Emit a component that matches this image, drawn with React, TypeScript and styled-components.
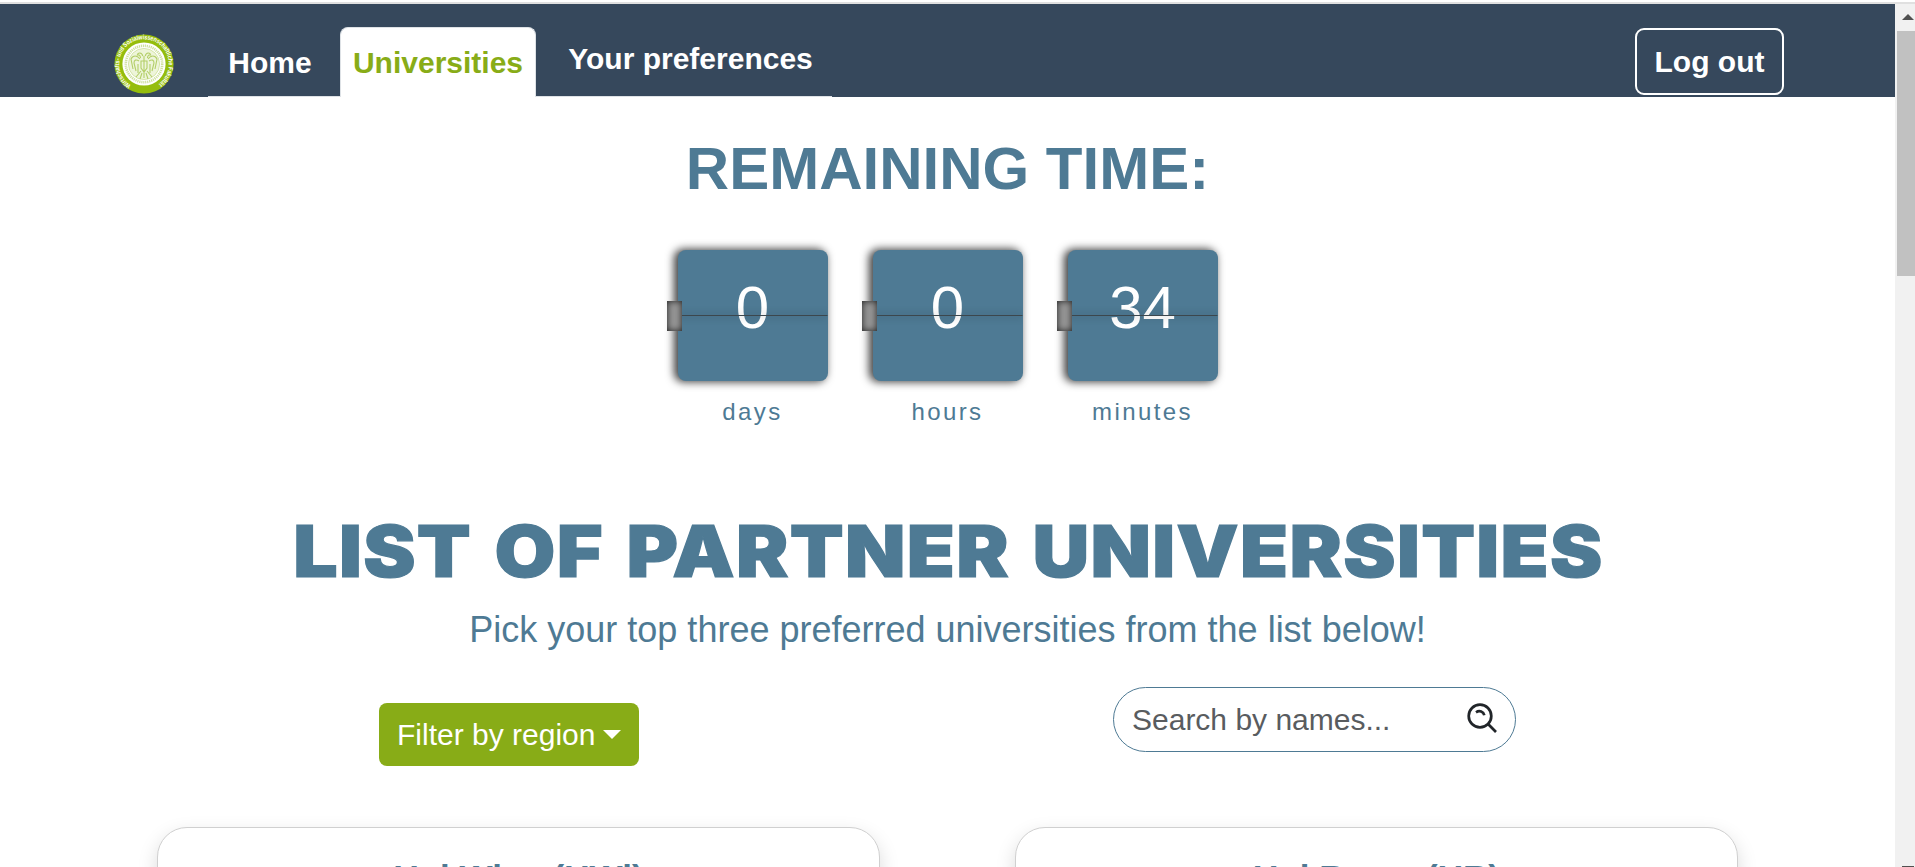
import React from "react";
import styled, { createGlobalStyle } from "styled-components";

const blue = "#4e7a94";
const green = "#88ac17";
const navy = "#36485c";

const GlobalStyle = createGlobalStyle`
  *, *::before, *::after { box-sizing: border-box; }
  html, body { margin: 0; height: 100%; overflow: hidden; background: #fff; }
  body { font-family: "Liberation Sans", Arial, sans-serif; font-size: 30px; line-height: 45px; }
  h1, h2, h3, p { margin: 0; }
`;

const Frame = styled.div`
  display: flex;
  flex-direction: column;
  width: 1915px;
  height: 867px;
  overflow: hidden;
  padding-top: 2px;
  background: #fff;
`;

const Viewport = styled.div`
  flex: 1;
  min-height: 0;
  display: flex;
  border-top: 2px solid #e0e0e0;
`;

const Page = styled.div`
  width: 1895px;
  display: flex;
  flex-direction: column;
  align-items: center;
  overflow: hidden;
`;

const Navbar = styled.nav`
  width: 100%;
  height: 93px;
  flex: none;
  display: flex;
  align-items: flex-start;
  padding: 0 111px 0 114px;
  background: ${navy};
`;

const Crest = styled.svg`
  width: 60px;
  height: 60px;
  margin: 30px 34px 0 0;
`;

const Tabs = styled.div`
  display: flex;
  align-items: flex-start;
  width: 624px;
  height: 93px;
  border-bottom: 1px solid #dee2e6;
`;

const Tab = styled.a<{ $active?: boolean; $width: number; $top?: number }>`
  flex: none;
  width: ${(p) => p.$width}px;
  height: ${(p) => (p.$active ? 70 : 60)}px;
  margin-top: ${(p) => p.$top ?? 23}px;
  margin-left: ${(p) => (p.$active ? 8 : 0)}px;
  padding-top: 12px;
  text-align: center;
  font-weight: 700;
  white-space: nowrap;
  border: 1px solid ${(p) => (p.$active ? "#dee2e6" : "transparent")};
  border-bottom: 0;
  border-radius: 8px 8px 0 0;
  color: ${(p) => (p.$active ? green : "#fff")};
  background: ${(p) => (p.$active ? "#fff" : "transparent")};
`;

const LogoutButton = styled.button`
  width: 149px;
  height: 67px;
  margin: 24px 0 0 auto;
  padding: 0 0 1px;
  border: 2px solid #fff;
  border-radius: 9px;
  background: transparent;
  color: #fff;
  font: 700 30px/45px "Liberation Sans", Arial, sans-serif;
`;

const TimerTitle = styled.h2`
  margin-top: 36px;
  font-size: 60px;
  line-height: 72px;
  color: ${blue};
`;

const Countdown = styled.div`
  display: flex;
  gap: 45px;
  margin-top: 45px;
`;

const Unit = styled.div`
  width: 150px;
  display: flex;
  flex-direction: column;
  align-items: center;
`;

const Flap = styled.div`
  position: relative;
  width: 150px;
  height: 131px;
  border-radius: 8px;
  background: ${blue};
  box-shadow: -3px 0 8px 1px rgba(0, 0, 0, 0.75);
  color: #fff;
  font-size: 60px;
  line-height: 115px;
  text-align: center;
`;

const Fold = styled.span`
  position: absolute;
  left: 0;
  top: 65px;
  width: 150px;
  height: 1px;
  background: #3c474d;
  box-shadow: 0 0 8px 1px rgba(0, 0, 0, 0.2);
  clip-path: inset(-15px 0);
`;

const Hinge = styled.span`
  position: absolute;
  left: -11px;
  top: 51px;
  width: 15px;
  height: 30px;
  background: #959595;
  box-shadow: inset 0 0 7px rgba(0, 0, 0, 0.8);
`;

const UnitLabel = styled.span`
  margin-top: 16px;
  font-size: 24px;
  line-height: 30px;
  letter-spacing: 2.4px;
  color: ${blue};
`;

const ListTitle = styled.h1`
  margin-top: 79px;
  padding-left: 1px;
  font-family: Inter, "Liberation Sans", sans-serif;
  font-size: 71px;
  line-height: 90px;
  font-weight: 900;
  letter-spacing: 1.2px;
  word-spacing: 5px;
  white-space: nowrap;
  color: ${blue};
  -webkit-text-stroke: 1.2px ${blue};
  transform: scaleX(1.106);
`;

const Subtitle = styled.p`
  margin-top: 7px;
  font-size: 36px;
  line-height: 54px;
  color: ${blue};
`;

const Controls = styled.div`
  width: 1137px;
  display: flex;
  justify-content: space-between;
  align-items: flex-start;
  margin-top: 30px;
`;

const FilterButton = styled.button`
  display: flex;
  align-items: center;
  width: 260px;
  height: 63px;
  margin-top: 16px;
  padding: 0 0 0 18px;
  border: 0;
  border-radius: 8px;
  background: ${green};
  color: #fff;
  font: 400 30px/45px "Liberation Sans", Arial, sans-serif;
  white-space: nowrap;
`;

const Caret = styled.span`
  margin: -1px 0 0 8px;
  border: 9px solid transparent;
  border-top-color: #fff;
  border-bottom: 0;
`;

const SearchBox = styled.div`
  display: flex;
  align-items: center;
  justify-content: space-between;
  width: 403px;
  height: 65px;
  padding: 0 18px;
  border: 1px solid ${blue};
  border-radius: 33px;
  color: #595c5f;
`;

const SearchIcon = styled.svg`
  width: 30px;
  height: 30px;
  margin-top: -4px;
`;

const Cards = styled.div`
  width: 1581px;
  display: flex;
  justify-content: space-between;
  margin-top: 61px;
`;

const Card = styled.article`
  width: 723px;
  height: 300px;
  flex: none;
  padding-top: 29px;
  border: 1px solid #d0d0d0;
  border-radius: 30px;
  background: #fff;
  box-shadow: 0 8px 20px rgba(0, 0, 0, 0.15);
  text-align: center;
`;

const CardTitle = styled.h3`
  font-size: 35px;
  line-height: 42px;
  color: ${blue};
`;

const Scrollbar = styled.div`
  width: 20px;
  display: flex;
  flex-direction: column;
  justify-content: space-between;
  background: #f1f1f1;
`;

const Thumb = styled.div`
  height: 245px;
  margin: 0 0 auto 2px;
  background: #c1c1c1;
`;

const ArrowUp = styled.span`
  margin: 10px 0 11px 7px;
  width: 0;
  border: 6px solid transparent;
  border-top: 0;
  border-bottom-color: #505050;
`;

const ArrowDown = styled.span`
  width: 12px;
  height: 1px;
  margin-left: 7px;
  background: #505050;
`;

const units = [
  { value: 0, label: "days" },
  { value: 0, label: "hours" },
  { value: 34, label: "minutes" },
];

const universities = ["Uni Wien (UWi)", "Uni Roma (UR)"];

function FacultyCrest() {
  return (
    <Crest viewBox="0 0 60 60">
      <defs>
        <path id="rim" d="M17.1 51.2 A24.8 24.8 0 1 1 42.9 51.2" />
      </defs>
      <circle cx="30" cy="30" r="29.6" fill="#95bd0d" />
      <circle cx="30" cy="30" r="21.6" fill="#fff" />
      <circle cx="30" cy="30" r="18.2" fill="none" stroke="#cfe09f" strokeWidth="2.6" strokeDasharray="1.2 .8" />
      <circle cx="30" cy="30" r="15.6" fill="#eef5da" stroke="#b9d36c" strokeWidth=".5" />
      <g fill="none" stroke="#b3ce68" strokeWidth="1.1">
        <path d="M28.8 22c-1-4-5-3.500-5.500-1 2-.5 3 .5 3.200 3M31.200 22c1-4 5-3.500 5.500-1-2-.5-3 .5-3.200 3" />
        <path d="M26 25c-3-4-7-4-9 0l2 10M34 25c3-4 7-4 9 0l-2 10M25 27c-3-2-5-1-5 2l2 8M35 27c3-2 5-1 5 2l-2 8M24 30v9M36 30v9" />
        <path d="M27 27h6v7l-3 4-3-4zM30 22v22M27 37l-5 6M33 37l5 6M28 39l-2 6M32 39l2 6" />
      </g>
      <text fill="#fff" fontSize="6.4" fontWeight="700" fontFamily="Liberation Sans, sans-serif">
        <textPath href="#rim" textLength="126" lengthAdjust="spacingAndGlyphs">
          Wirtschafts- und Sozialwissenschaftliche Fakultät
        </textPath>
      </text>
    </Crest>
  );
}

export default function App() {
  return (
    <Frame>
      <GlobalStyle />
      <Viewport>
        <Page>
          <Navbar>
            <FacultyCrest />
            <Tabs>
              <Tab $width={124}>Home</Tab>
              <Tab $active $width={196}>Universities</Tab>
              <Tab $width={309} $top={19}>Your preferences</Tab>
            </Tabs>
            <LogoutButton>Log out</LogoutButton>
          </Navbar>
          <TimerTitle>REMAINING TIME:</TimerTitle>
          <Countdown>
            {units.map((u) => (
              <Unit key={u.label}>
                <Flap>
                  {u.value}
                  <Fold />
                  <Hinge />
                </Flap>
                <UnitLabel>{u.label}</UnitLabel>
              </Unit>
            ))}
          </Countdown>
          <ListTitle>LIST OF PARTNER UNIVERSITIES</ListTitle>
          <Subtitle>Pick your top three preferred universities from the list below!</Subtitle>
          <Controls>
            <FilterButton>
              Filter by region
              <Caret />
            </FilterButton>
            <SearchBox>
              Search by names...
              <SearchIcon viewBox="0 0 30 30" fill="none" stroke="#212529" strokeWidth="2.7">
                <circle cx="13" cy="13" r="11.300" />
                <path d="M21.300 21.300L29 29" />
                <path d="M9 9.300C12.500 7 16.500 8.600 17.300 12.300" />
              </SearchIcon>
            </SearchBox>
          </Controls>
          <Cards>
            {universities.map((name) => (
              <Card key={name}>
                <CardTitle>{name}</CardTitle>
              </Card>
            ))}
          </Cards>
        </Page>
        <Scrollbar>
          <ArrowUp />
          <Thumb />
          <ArrowDown />
        </Scrollbar>
      </Viewport>
    </Frame>
  );
}
